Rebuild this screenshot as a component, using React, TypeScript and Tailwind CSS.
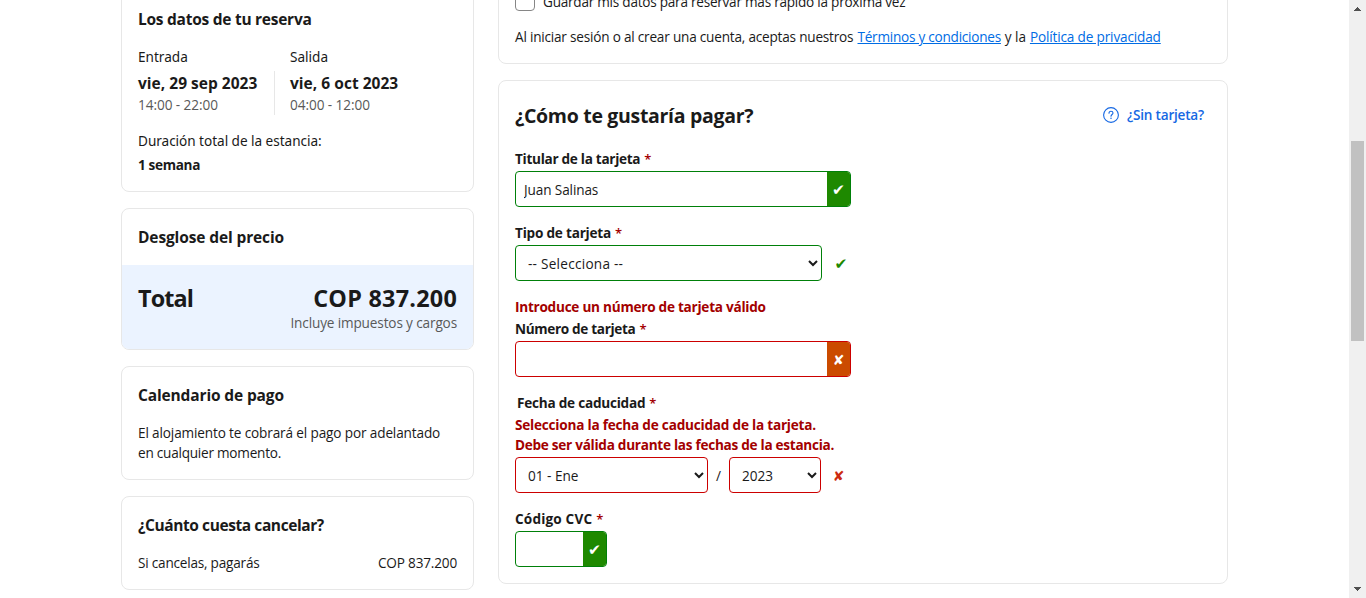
import type { ReactNode } from 'react';

function Card({ className = '', children }: { className?: string; children: ReactNode }) {
  return <section className={`rounded-lg border border-[#e7e7e7] bg-white ${className}`}>{children}</section>;
}

function Title({ className = '', children }: { className?: string; children: ReactNode }) {
  return <h2 className={`text-[15.5px] leading-6 font-bold whitespace-nowrap ${className}`}>{children}</h2>;
}

function Check({ className = '' }: { className?: string }) {
  return <span className={`flex w-3 justify-center pt-px font-['DejaVu_Sans'] text-[15.5px] leading-5 ${className}`}>✔</span>;
}

function Cross({ className = '' }: { className?: string }) {
  return <span className={`flex w-[11px] justify-center pt-px font-['DejaVu_Sans'] text-[14px] leading-5 ${className}`}>✘</span>;
}

function Label({ className = '', children }: { className?: string; children: ReactNode }) {
  return (
    <div className="flex h-[22px] text-[13.6px] leading-5 font-bold whitespace-nowrap">
      <label className={className}>{children}</label>
      <span className="ml-1 text-[13px] font-semibold text-[#a30000]">*</span>
    </div>
  );
}

function Status({ ok }: { ok: boolean }) {
  return (
    <span
      className={`flex w-[23px] shrink-0 items-center justify-center text-white ${ok ? 'bg-[#1e8900]' : 'bg-[#cb4b00]'}`}
    >
      {ok ? <Check /> : <Cross />}
    </span>
  );
}

function Field({ ok, width, value = '' }: { ok: boolean; width: string; value?: string }) {
  return (
    <div className={`flex h-9 overflow-hidden rounded border ${width} ${ok ? 'border-[#008009]' : 'border-[#cc0000]'}`}>
      <input
        className="min-w-0 flex-1 px-2 pt-0.5 text-[13.6px] tracking-[-0.12px] outline-none"
        defaultValue={value}
      />
      <Status ok={ok} />
    </div>
  );
}

function Select({ ok, width, value, className = '' }: { ok: boolean; width: string; value: string; className?: string }) {
  return (
    <select
      className={`h-9 rounded border bg-white px-2 text-[13.6px] text-[#1a1a1a] ${width} ${className} ${ok ? 'border-[#008009]' : 'border-[#cc0000]'}`}
      defaultValue={value}
    >
      <option>{value}</option>
    </select>
  );
}

function Sidebar() {
  return (
    <aside className="-mt-[10px] flex w-[353px] flex-col gap-4">
      <Card className="p-4">
        <Title className="tracking-[-0.26px]">Los datos de tu reserva</Title>
        <div className="mt-4 flex">
          <div className="w-[136px]">
            <p className="h-6 font-['Noto_Sans']">Entrada</p>
            <Title className="tracking-[0.02px]">vie, 29 sep 2023</Title>
            <p className="tracking-[-0.06px] text-[#595959]">14:00 - 22:00</p>
          </div>
          <div className="mt-6 mr-[15px] w-px bg-[#e7e7e7]" />
          <div>
            <p className="h-6 font-['Noto_Sans']">Salida</p>
            <Title className="tracking-[0.03px]">vie, 6 oct 2023</Title>
            <p className="tracking-[-0.06px] text-[#595959]">04:00 - 12:00</p>
          </div>
        </div>
        <p className="mt-4 font-['Noto_Sans'] tracking-[-0.04px]">Duración total de la estancia:</p>
        <p className="mt-1 font-bold tracking-[-0.35px]">1 semana</p>
      </Card>

      <Card className="overflow-hidden">
        <Title className="px-4 py-4 tracking-[-0.12px]">Desglose del precio</Title>
        <div className="bg-[#ebf3ff] px-4 pt-[17px] pb-4">
          <div className="flex h-[31px] justify-between text-[23.4px] leading-8 font-bold">
            <span className="tracking-[-0.9px]">Total</span>
            <span className="tracking-[0.24px]">COP 837.200</span>
          </div>
          <p className="text-right tracking-[-0.14px] text-[#595959]">Incluye impuestos y cargos</p>
        </div>
      </Card>

      <Card className="p-4">
        <Title className="tracking-[-0.14px]">Calendario de pago</Title>
        <p className="mt-4 tracking-[-0.14px]">El alojamiento te cobrará el pago por adelantado</p>
        <p className="tracking-[-0.24px]">en cualquier momento.</p>
      </Card>

      <Card className="p-4">
        <Title className="tracking-[-0.41px]">¿Cuánto cuesta cancelar?</Title>
        <div className="mt-4 flex justify-between">
          <span className="tracking-[-0.22px]">Si cancelas, pagarás</span>
          <span className="tracking-[-0.18px]">COP 837.200</span>
        </div>
      </Card>
    </aside>
  );
}

function Payment() {
  return (
    <div className="-mt-[26px] flex w-[730px] flex-col gap-4">
      <Card className="p-4">
        <div className="flex h-5 gap-2">
          <span className="size-5 rounded border border-[#868686]" />
          <span className="pt-px tracking-[-0.25px]">Guardar mis datos para reservar más rápido la próxima vez</span>
        </div>
        <div className="mt-4 flex">
          <span className="w-[342.5px] tracking-[-0.21px]">Al iniciar sesión o al crear una cuenta, aceptas nuestros</span>
          <a className="tracking-[-0.25px] text-[#006ce4] underline">Términos y condiciones</a>
          <span className="w-[29px] text-center">y la</span>
          <a className="tracking-[-0.16px] text-[#006ce4] underline">Política de privacidad</a>
        </div>
      </Card>

      <Card className="px-4 pt-[21px] pb-4">
        <div className="flex justify-between">
          <h2 className="text-[19.5px] leading-7 font-bold tracking-[-0.31px]">¿Cómo te gustaría pagar?</h2>
          <a className="mr-[7px] flex items-center gap-2 pb-0.5 text-[#1668e3]">
            <svg width="16" height="16" viewBox="0 0 16 16" fill="none" stroke="currentColor" aria-hidden="true">
              <circle cx="8" cy="8" r="7.4" strokeWidth="1.1" />
              <path d="M6 6.3 C6 5 6.9 4.3 8 4.3 C9.2 4.3 10 5.1 10 6.1 C10 7.5 8 7.6 8 9.3" strokeWidth="1.1" strokeLinecap="round" />
              <circle cx="8" cy="11.3" r="0.75" fill="currentColor" stroke="none" />
            </svg>
            <span className="font-semibold tracking-[-0.22px]">¿Sin tarjeta?</span>
          </a>
        </div>

        <div className="mt-[19px]">
          <Label className="tracking-[-0.3px]">Titular de la tarjeta</Label>
          <Field ok width="w-[336px]" value="Juan Salinas" />
        </div>

        <div className="mt-4">
          <Label className="tracking-[-0.22px]">Tipo de tarjeta</Label>
          <div className="flex items-center">
            <Select ok width="w-[307px]" value="-- Selecciona --" className="tracking-[0.25px]" />
            <Check className="ml-[13px] text-[#1e8900]" />
          </div>
        </div>

        <div className="mt-4">
          <p className="h-[22px] font-bold tracking-[-0.26px] text-[#a30000]">Introduce un número de tarjeta válido</p>
          <Label className="tracking-[-0.34px]">Número de tarjeta</Label>
          <Field ok={false} width="w-[336px]" />
        </div>

        <div className="mt-4">
          <div className="pl-0.5">
            <Label className="tracking-[-0.24px]">Fecha de caducidad</Label>
          </div>
          <p className="font-bold tracking-[-0.22px] text-[#a30000]">Selecciona la fecha de caducidad de la tarjeta.</p>
          <p className="h-[22px] font-bold tracking-[-0.28px] text-[#a30000]">Debe ser válida durante las fechas de la estancia.</p>
          <div className="flex items-center">
            <Select ok={false} width="w-[193px]" value="01 - Ene" />
            <span className="w-[21px] pt-0.5 text-center">/</span>
            <Select ok={false} width="w-[92px]" value="2023" />
            <Cross className="ml-3 text-[#cc2a10]" />
          </div>
        </div>

        <div className="mt-4">
          <Label className="tracking-[0.16px]">Código CVC</Label>
          <Field ok width="w-[92px]" />
        </div>
      </Card>
    </div>
  );
}

function ScrollBar() {
  return (
    <div className="flex w-[17px] shrink-0 flex-col items-center bg-[#f0f0f0]">
      <svg width="17" height="17" viewBox="0 0 17 17" fill="#505050" shapeRendering="crispEdges" aria-hidden="true">
        <path d="M8 7h1v1h1v1h1v1h1v1H5v-1h1V9h1V8h1z" />
      </svg>
      <div className="mt-[124px] h-[200px] w-[13px] bg-[#c1c1c1]" />
      <svg className="mt-auto" width="17" height="17" viewBox="0 0 17 17" fill="#505050" shapeRendering="crispEdges" aria-hidden="true">
        <path d="M5 6h7v1h-1v1h-1v1H9v1H8V9H7V8H6V7H5z" />
      </svg>
    </div>
  );
}

export default function App() {
  return (
    <div className="flex h-[598px] w-full overflow-hidden bg-white font-['Open_Sans','Noto_Sans',sans-serif] text-[13.6px] leading-5 whitespace-nowrap text-[#1a1a1a]">
      <main className="flex flex-1 items-start gap-6 pl-[121px]">
        <Sidebar />
        <Payment />
      </main>
      <ScrollBar />
    </div>
  );
}
